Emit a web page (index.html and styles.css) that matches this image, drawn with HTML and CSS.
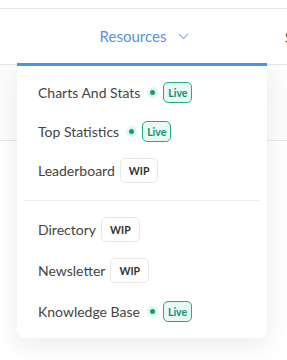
FILE: index.html
```html
<!DOCTYPE html>
<html lang="en">
<head>
    <meta charset="UTF-8">
    <meta name="viewport" content="width=device-width, initial-scale=1.0">
    <title>Resources Menu</title>
    <link rel="stylesheet" href="styles.css">
</head>
<body>
    <header class="topbar">
        <nav class="nav">
            <div class="nav-item active">
                <span class="nav-label">Resources</span>
                <svg class="chevron" width="11" height="7" viewBox="0 0 11 7">
                    <path d="M1 1 L5.5 5.5 L10 1" fill="none" stroke="#8fb2e6" stroke-width="1.2"/>
                </svg>

                <div class="dropdown">
                    <div class="group">
                        <a class="menu-link" href="#">Charts And Stats <span class="dot"></span><span class="badge live">Live</span></a>
                        <a class="menu-link" href="#">Top Statistics <span class="dot"></span><span class="badge live">Live</span></a>
                        <a class="menu-link" href="#">Leaderboard <span class="badge wip">WIP</span></a>
                    </div>
                    <div class="divider"></div>
                    <div class="group second">
                        <a class="menu-link" href="#">Directory <span class="badge wip">WIP</span></a>
                        <a class="menu-link" href="#">Newsletter <span class="badge wip">WIP</span></a>
                        <a class="menu-link" href="#">Knowledge Base <span class="dot"></span><span class="badge live">Live</span></a>
                    </div>
                </div>
            </div>
            <div class="nav-item">
                <span class="nav-label plain">Support</span>
            </div>
        </nav>
    </header>

    <section class="page">
        <div class="strip"></div>
    </section>
</body>
</html>
```

FILE: styles.css
```css
/* Basic styling */
* {
    margin: 0;
    padding: 0;
    box-sizing: border-box;
    font-family: 'Lato', 'Noto Sans', sans-serif;
}

html {
    overflow: hidden;
}

body {
    background-color: #ffffff;
    color: #333;
    min-height: 360px;
}

.topbar {
    margin-top: 8px;
    border-top: 1px solid #e6e6e6;
    border-bottom: 1px solid #e6e6e6;
}

.nav {
    display: flex;
    padding-left: 17px;
    height: 55px;
}

.nav-item {
    position: relative;
    flex: 0 0 250px;
    display: flex;
    align-items: center;
    justify-content: center;
    gap: 12px;
    margin-bottom: -2px;
    padding-bottom: 1px;
}

.nav-item.active {
    border-bottom: 3px solid #4499e8;
}

.nav-item + .nav-item {
    flex: 0 0 auto;
    margin-left: 18px;
    justify-content: flex-start;
}

.nav-label {
    font-size: 15px;
    color: #5294e2;
    margin-left: 5px;
}

.nav-label.plain {
    color: #333;
    margin-left: 0;
}

.chevron {
    margin-top: 1px;
}

/* Dropdown panel */
.dropdown {
    position: absolute;
    top: calc(100% + 3px);
    left: 0;
    width: 250px;
    background-color: #fff;
    border-radius: 0 0 8px 8px;
    box-shadow: 0 8px 24px rgba(30, 40, 70, 0.09);
    padding: 7px 7px 6px;
    z-index: 5;
}

.group {
    display: flex;
    flex-direction: column;
}

.group .menu-link {
    height: 39px;
}

.group.second {
    padding-top: 8px;
}

.group.second .menu-link {
    height: 41px;
}

.menu-link {
    display: flex;
    align-items: center;
    gap: 5px;
    padding-left: 14px;
    font-size: 14px;
    color: #444;
    text-decoration: none;
}

.divider {
    height: 1px;
    margin-top: 10px;
    background-color: #ececec;
}

.dot {
    width: 5px;
    height: 5px;
    margin: 0 3px 0 5px;
    border-radius: 50%;
    background-color: #129d7c;
    box-shadow: 0 0 0 3px #e3f5ef;
}

.badge {
    display: inline-flex;
    align-items: center;
    justify-content: center;
    font-size: 10.5px;
    font-weight: 700;
    border-radius: 5px;
}

.badge.live {
    height: 21px;
    padding: 0 4px;
    color: #128e72;
    background-color: #e9f8f3;
    border: 1px solid #23a88a;
}

.badge.wip {
    height: 25px;
    padding: 0 8px;
    color: #333;
    background-color: #fff;
    border: 1px solid #e8e8e8;
}

/* Page behind the menu */
.page {
    height: 76px;
    border-bottom: 1px solid #e6e6e6;
    background-color: #fcfcfd;
}
```
